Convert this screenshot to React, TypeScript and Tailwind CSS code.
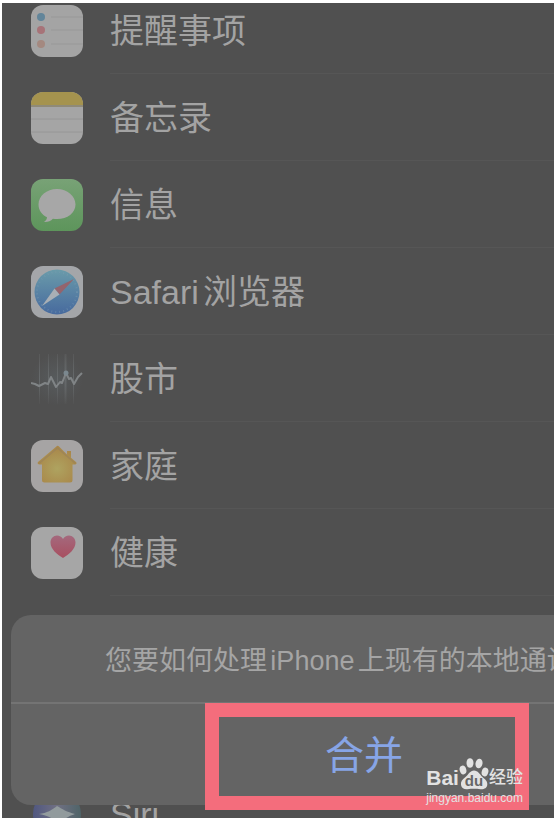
import type { ReactNode } from 'react';

type AppRow = { name: string; icon: ReactNode };

function IconTile({ id, fill, children }: { id: string; fill: string; children?: ReactNode }) {
  return (
    <svg width="52" height="52" viewBox="0 0 52 52" className="shrink-0" aria-hidden="true">
      <defs>
        <clipPath id={id}>
          <rect width="52" height="52" rx="12" />
        </clipPath>
      </defs>
      <g clipPath={`url(#${id})`}>
        <rect width="52" height="52" fill={fill} />
        {children}
      </g>
    </svg>
  );
}

const RemindersIcon = () => (
  <IconTile id="reminders" fill="#a4a4a4">
    <circle cx="10" cy="12" r="4" fill="#62859a" />
    <circle cx="10" cy="25" r="4" fill="#a77378" />
    <circle cx="10" cy="39" r="4" fill="#a48980" />
    <path d="M20 12h32M20 25h32M20 39h32" stroke="#989898" strokeWidth="1" />
  </IconTile>
);

const NotesIcon = () => (
  <IconTile id="notes" fill="#a5a5a5">
    <rect width="52" height="14" fill="#a5934e" />
    <rect y="13" width="52" height="2" fill="#8f8a78" />
    <path d="M0 27h52M0 40h52" stroke="#969696" strokeWidth="1" />
  </IconTile>
);

const MessagesIcon = () => (
  <IconTile id="messages" fill="url(#messagesGreen)">
    <defs>
      <linearGradient id="messagesGreen" x1="0" y1="0" x2="0" y2="1">
        <stop offset="0" stopColor="#78a276" />
        <stop offset="1" stopColor="#5d955b" />
      </linearGradient>
    </defs>
    <path
      d="M26 10C15.500 10 7.500 17 7.500 25.500c0 5.500 3.200 10 8.500 12.800-.2 2-1.200 3.500-3 4.700 3.800.2 6.700-1.100 8.900-3.300 1.400.3 2.700.4 4.100.4 10.500 0 18.500-6.300 18.500-14.600S36.500 10 26 10Z"
      fill="#a7a7a7"
    />
  </IconTile>
);

const SafariIcon = () => (
  <IconTile id="safari" fill="#a4a6a9">
    <defs>
      <linearGradient id="safariBlue" x1="0" y1="0" x2="0" y2="1">
        <stop offset="0" stopColor="#6a9baa" />
        <stop offset="1" stopColor="#476a9e" />
      </linearGradient>
    </defs>
    <circle cx="26" cy="26" r="22.500" fill="url(#safariBlue)" />
    <circle cx="26" cy="26" r="20" fill="none" stroke="#83a0b4" strokeWidth="2" strokeDasharray="1 3" opacity="0.4" />
    <path d="M43 13 23.500 22.500 28.500 28.500Z" fill="#94646d" />
    <path d="M11 40 23.500 22.500 28.500 28.500Z" fill="#a9afb5" />
  </IconTile>
);

const StocksIcon = () => (
  <IconTile id="stocks" fill="url(#stocksShade)">
    <defs>
      <radialGradient id="stocksShade">
        <stop offset="0" stopColor="#575b5d" />
        <stop offset="1" stopColor="#505050" />
      </radialGradient>
      <linearGradient id="stocksBars" x1="0" y1="0" x2="0" y2="1">
        <stop offset="0" stopColor="#6b6d6e" stopOpacity="0.3" />
        <stop offset="0.5" stopColor="#666a6c" />
        <stop offset="1" stopColor="#6b6d6e" stopOpacity="0.1" />
      </linearGradient>
    </defs>
    <g fill="url(#stocksBars)">
      <rect x="8" y="1" width="1" height="50" />
      <rect x="17" y="1" width="1" height="50" />
      <rect x="26" y="1" width="1" height="50" />
      <rect x="42" y="1" width="1" height="50" />
      <rect x="33.500" y="1" width="2" height="50" />
    </g>
    <path
      d="M0 30 4 31 8 33 14 30 17 31 20 24 25 34 29 29 31 30 35 20 38 26 40 25 43 31 47 24 51 20"
      fill="none"
      stroke="#808486"
      strokeWidth="2"
      strokeLinejoin="round"
    />
    <circle cx="35" cy="20" r="2.500" fill="#7b888f" />
  </IconTile>
);

const HomeIcon = () => (
  <IconTile id="home" fill="#a6a4a4">
    <defs>
      <radialGradient id="homeGlow" cx="0.5" cy="0.62" r="0.6">
        <stop offset="0" stopColor="#aea360" />
        <stop offset="1" stopColor="#a98649" />
      </radialGradient>
    </defs>
    <path
      d="M26 6 7 22c-1 1 0 2.500 1.500 2.500H11V40q0 2.500 2.500 2.500h25.500q2.500 0 2.500-2.500V24.500H44c1.500 0 2-1.500 1-2.500l-5-4.200V11h-4v3.500L28 6.500q-1-1-2-.5Z"
      fill="url(#homeGlow)"
    />
    <path d="M8 23.500 26.500 8 44.500 23.500" fill="none" stroke="#98815b" strokeWidth="1.500" opacity="0.6" />
  </IconTile>
);

const HealthIcon = () => (
  <IconTile id="health" fill="#a6a6a6">
    <defs>
      <linearGradient id="healthPink" x1="0" y1="0" x2="0" y2="1">
        <stop offset="0" stopColor="#a4697d" />
        <stop offset="1" stopColor="#a84f60" />
      </linearGradient>
    </defs>
    <path
      d="M32 31C26 27.500 19.500 22 19.500 15.500 19.500 11.500 22.500 8.500 26 8.500c2.600 0 4.700 1.300 6 3.500 1.300-2.200 3.400-3.500 6-3.500 3.500 0 6.500 3 6.500 7C44.500 22 38 27.500 32 31Z"
      fill="url(#healthPink)"
    />
  </IconTile>
);

const SiriIcon = () => (
  <IconTile id="siri" fill="#505050">
    <defs>
      <linearGradient id="siriOrb" x1="0" y1="0" x2="1" y2="0">
        <stop offset="0" stopColor="#505780" />
        <stop offset="0.5" stopColor="#707083" />
        <stop offset="1" stopColor="#4f6468" />
      </linearGradient>
    </defs>
    <circle cx="26" cy="26" r="24" fill="url(#siriOrb)" />
    <path d="M26 18c5 3 10 6 18 8-9 3-14 7-17 13-3-8-8-11-19-13 8-1 13-4 18-8Z" fill="#929b9d" />
    <path d="M28 5c6 0 12 5 15 12-5-3-10-3-15-1Z" fill="#6e5866" />
  </IconTile>
);

const apps: AppRow[] = [
  { name: '提醒事项', icon: <RemindersIcon /> },
  { name: '备忘录', icon: <NotesIcon /> },
  { name: '信息', icon: <MessagesIcon /> },
  { name: 'Safari浏览器', icon: <SafariIcon /> },
  { name: '股市', icon: <StocksIcon /> },
  { name: '家庭', icon: <HomeIcon /> },
  { name: '健康', icon: <HealthIcon /> },
];

function Row({ app }: { app: AppRow }) {
  return (
    <li className="flex h-[87px] items-center pl-[29px]">
      {app.icon}
      <span className="ml-[27px] flex h-full flex-1 items-center border-b border-[#565656] pt-0.5 text-[34px] leading-10 text-[#a3a3a3]">
        {app.name}
      </span>
    </li>
  );
}

function Watermark() {
  return (
    <div className="absolute right-[31px] bottom-3 text-[#e2e2e2]">
      <div className="flex items-end justify-between">
        <span className="text-[21px] leading-6 font-bold">Bai</span>
        <svg width="30" height="32" viewBox="0 0 30 32" aria-hidden="true">
          <g fill="currentColor">
            <ellipse cx="4" cy="12" rx="3.300" ry="4.500" transform="rotate(-15 4 12)" />
            <ellipse cx="11" cy="5" rx="3.500" ry="4.800" />
            <ellipse cx="20" cy="5.500" rx="3.500" ry="4.800" transform="rotate(10 20 5.500)" />
            <ellipse cx="26" cy="14" rx="3.300" ry="4.500" transform="rotate(15 26 14)" />
            <path d="M15 12.500c-4 0-5.500 4-8.500 6.500C3 21.500 1.500 24 2 27c.6 3.500 3.500 4.500 6.500 4.200 4.500-.6 8.500-.6 13 0 3.500.3 6.500-1 6.800-4.700.2-3.500-2-5-4.800-7.500-3-2.700-4.500-6.500-8.500-6.500Z" />
          </g>
          <text x="15" y="28" textAnchor="middle" fontSize="15" fontWeight="700" fill="#666">
            du
          </text>
        </svg>
        <span className="text-[17px] leading-6 font-medium">经验</span>
      </div>
      <div className="text-[12px] leading-4">jingyan.baidu.com</div>
    </div>
  );
}

export default function App() {
  return (
    <div className="h-screen bg-white pt-[3px] pl-[2px] font-['Liberation_Sans','Noto_Sans_CJK_SC',sans-serif] [text-autospace:normal]">
      <main className="relative h-full overflow-hidden bg-[#505050]">
        {/* App list, scrolled a little past its first row */}
        <ul className="-mt-4">
          {apps.map(app => (
            <Row key={app.name} app={app} />
          ))}
          <li className="h-[174px]" aria-hidden="true" />
          <Row app={{ name: 'Siri', icon: <SiriIcon /> }} />
        </ul>

        {/* Action sheet */}
        <section className="absolute top-[612px] left-[9px] w-[706px] overflow-hidden rounded-[20px] bg-[#646464]">
          <h2 className="flex h-[89px] items-center border-b-2 border-[#747474] pt-1 pl-[94px] text-[27px] leading-9 whitespace-nowrap text-[#a5a5a5]">
            您要如何处理iPhone上现有的本地通讯录?
          </h2>
          <button type="button" className="h-[101px] w-full pt-0.5 text-[39px] leading-12 text-[#87a5e6]">
            合并
          </button>
        </section>

        {/* Highlight around the merge button */}
        <div className="pointer-events-none absolute top-[700px] left-[203px] h-[107px] w-[324px] border-14 border-[#f46d7c]" />

        <Watermark />
      </main>
    </div>
  );
}
